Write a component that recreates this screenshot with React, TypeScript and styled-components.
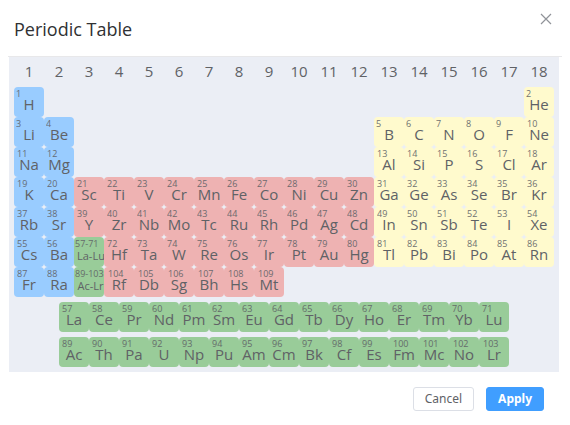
import React from 'react';
import styled, { createGlobalStyle, css } from 'styled-components';

type Kind = 'alkali' | 'metal' | 'nonmetal' | 'inner';

interface Entry {
  number: string;
  symbol: string;
  column: number;
  row: number;
  kind: Kind;
}

const fills: Record<Kind, string> = {
  alkali: '#99ccff',
  metal: '#eeb2b2',
  nonmetal: '#fffacd',
  inner: '#99cc99',
};

const groups = Array.from({ length: 18 }, (_, i) => i + 1);

function kindOf(group: number): Kind {
  if (group <= 2) return 'alkali';
  return group <= 12 ? 'metal' : 'nonmetal';
}

function series(row: number, group: number, first: number, symbols: string): Entry[] {
  return symbols.split(' ').map((symbol, i) => ({
    number: String(first + i),
    symbol,
    row,
    column: (group + i) * 2 - 1,
    kind: kindOf(group + i),
  }));
}

function innerSeries(row: number, first: number, symbols: string): Entry[] {
  return symbols.split(' ').map((symbol, i) => ({
    number: String(first + i),
    symbol,
    row,
    column: 4 + i * 2,
    kind: 'inner',
  }));
}

const mainEntries: Entry[] = [
  ...series(2, 1, 1, 'H'),
  ...series(2, 18, 2, 'He'),
  ...series(3, 1, 3, 'Li Be'),
  ...series(3, 13, 5, 'B C N O F Ne'),
  ...series(4, 1, 11, 'Na Mg'),
  ...series(4, 13, 13, 'Al Si P S Cl Ar'),
  ...series(5, 1, 19, 'K Ca Sc Ti V Cr Mn Fe Co Ni Cu Zn Ga Ge As Se Br Kr'),
  ...series(6, 1, 37, 'Rb Sr Y Zr Nb Mo Tc Ru Rh Pd Ag Cd In Sn Sb Te I Xe'),
  ...series(7, 1, 55, 'Cs Ba'),
  { number: '57-71', symbol: 'La-Lu', row: 7, column: 5, kind: 'inner' },
  ...series(7, 4, 72, 'Hf Ta W Re Os Ir Pt Au Hg Tl Pb Bi Po At Rn'),
  ...series(8, 1, 87, 'Fr Ra'),
  { number: '89-103', symbol: 'Ac-Lr', row: 8, column: 5, kind: 'inner' },
  ...series(8, 4, 104, 'Rf Db Sg Bh Hs Mt'),
];

const lanthanides = innerSeries(1, 57, 'La Ce Pr Nd Pm Sm Eu Gd Tb Dy Ho Er Tm Yb Lu');
const actinides = innerSeries(1, 89, 'Ac Th Pa U Np Pu Am Cm Bk Cf Es Fm Mc No Lr');

const GlobalStyle = createGlobalStyle`
  * {
    box-sizing: border-box;
  }
  body {
    margin: 0;
    background: #ffffff;
    color: #606266;
    font-family: 'Noto Sans', 'Open Sans', sans-serif;
  }
  button {
    font-family: inherit;
    cursor: pointer;
  }
`;

const Dialog = styled.section`
  padding: 0 8px;
`;

const Header = styled.header`
  display: flex;
  justify-content: space-between;
  align-items: flex-start;
  height: 57px;
  padding: 13px 10px 0 6px;
  border-bottom: 1px solid #e8e8ea;
`;

const Title = styled.h1`
  margin: 0;
  padding-top: 4px;
  font-family: 'Open Sans', sans-serif;
  font-size: 18px;
  font-weight: 400;
  line-height: 24px;
  color: #303133;
`;

const CloseButton = styled.button`
  display: flex;
  padding: 0;
  border: 0;
  background: none;
  color: #909399;
`;

const Panel = styled.main`
  display: flex;
  flex-direction: column;
  gap: 5px;
  margin: 0 3px 0 1px;
  padding: 0 5px 5px;
  background: #ebeef5;
  font-family: 'Open Sans', sans-serif;
`;

const ElementGrid = styled.div`
  display: grid;
  grid-template-columns: repeat(36, minmax(0, 1fr));
  grid-auto-rows: 30px;
`;

const GroupNumber = styled.div`
  grid-column: span 2;
  font-size: 15px;
  line-height: 29px;
  text-align: center;
`;

const Cell = styled.button<{ $kind: Kind; $column: number; $row: number }>`
  display: flex;
  flex-direction: column;
  justify-content: flex-start;
  align-items: stretch;
  grid-column: ${(p) => p.$column} / span 2;
  grid-row: ${(p) => p.$row};
  padding: 1px 0 0;
  border: 0;
  border-radius: 4px;
  background: ${(p) => fills[p.$kind]};
  color: #606266;
  font-family: 'Open Sans', sans-serif;
  text-align: left;
  white-space: nowrap;
`;

const AtomicNumber = styled.span<{ $digits: number }>`
  padding-left: ${(p) => (p.$digits === 3 ? 4 : p.$digits === 2 ? 3 : p.$digits === 1 ? 2 : 1)}px;
  font-size: 9px;
  line-height: 12px;
  opacity: 0.9;
`;

const ElementSymbol = styled.span<{ $range: boolean }>`
  font-size: 15px;
  line-height: 9px;
  text-align: center;
  ${(p) =>
    p.$range &&
    css`
      padding-left: 3px;
      font-size: 11px;
      line-height: 12px;
    `}
`;

const Footer = styled.footer`
  display: flex;
  justify-content: flex-end;
  gap: 12px;
  padding: 15px 18px;
`;

const ActionButton = styled.button<{ $primary?: boolean }>`
  height: 24px;
  padding: 0 11px;
  border: 1px solid ${(p) => (p.$primary ? '#409eff' : '#dcdfe6')};
  border-radius: 3px;
  background: ${(p) => (p.$primary ? '#409eff' : '#ffffff')};
  color: ${(p) => (p.$primary ? '#ffffff' : '#606266')};
  font-size: 12px;
  font-weight: ${(p) => (p.$primary ? 700 : 400)};
  line-height: 22px;
`;

function ElementCells({ entries }: { entries: Entry[] }) {
  return (
    <>
      {entries.map((e) => (
        <Cell key={e.number} type="button" $kind={e.kind} $column={e.column} $row={e.row}>
          <AtomicNumber $digits={e.number.length}>{e.number}</AtomicNumber>
          <ElementSymbol $range={e.symbol.includes('-')}>{e.symbol}</ElementSymbol>
        </Cell>
      ))}
    </>
  );
}

export default function App() {
  return (
    <>
      <GlobalStyle />
      <Dialog role="dialog" aria-labelledby="dialog-title">
        <Header>
          <Title id="dialog-title">Periodic Table</Title>
          <CloseButton type="button" aria-label="Close">
            <svg width="12" height="12" viewBox="0 0 12 12" fill="none" stroke="currentColor" strokeWidth="1.2">
              <path d="M1 1 L11 11 M11 1 L1 11" />
            </svg>
          </CloseButton>
        </Header>
        <Panel>
          <ElementGrid>
            {groups.map((g) => (
              <GroupNumber key={g}>{g}</GroupNumber>
            ))}
            <ElementCells entries={mainEntries} />
          </ElementGrid>
          <ElementGrid>
            <ElementCells entries={lanthanides} />
          </ElementGrid>
          <ElementGrid>
            <ElementCells entries={actinides} />
          </ElementGrid>
        </Panel>
        <Footer>
          <ActionButton type="button">Cancel</ActionButton>
          <ActionButton type="button" $primary>
            Apply
          </ActionButton>
        </Footer>
      </Dialog>
    </>
  );
}
